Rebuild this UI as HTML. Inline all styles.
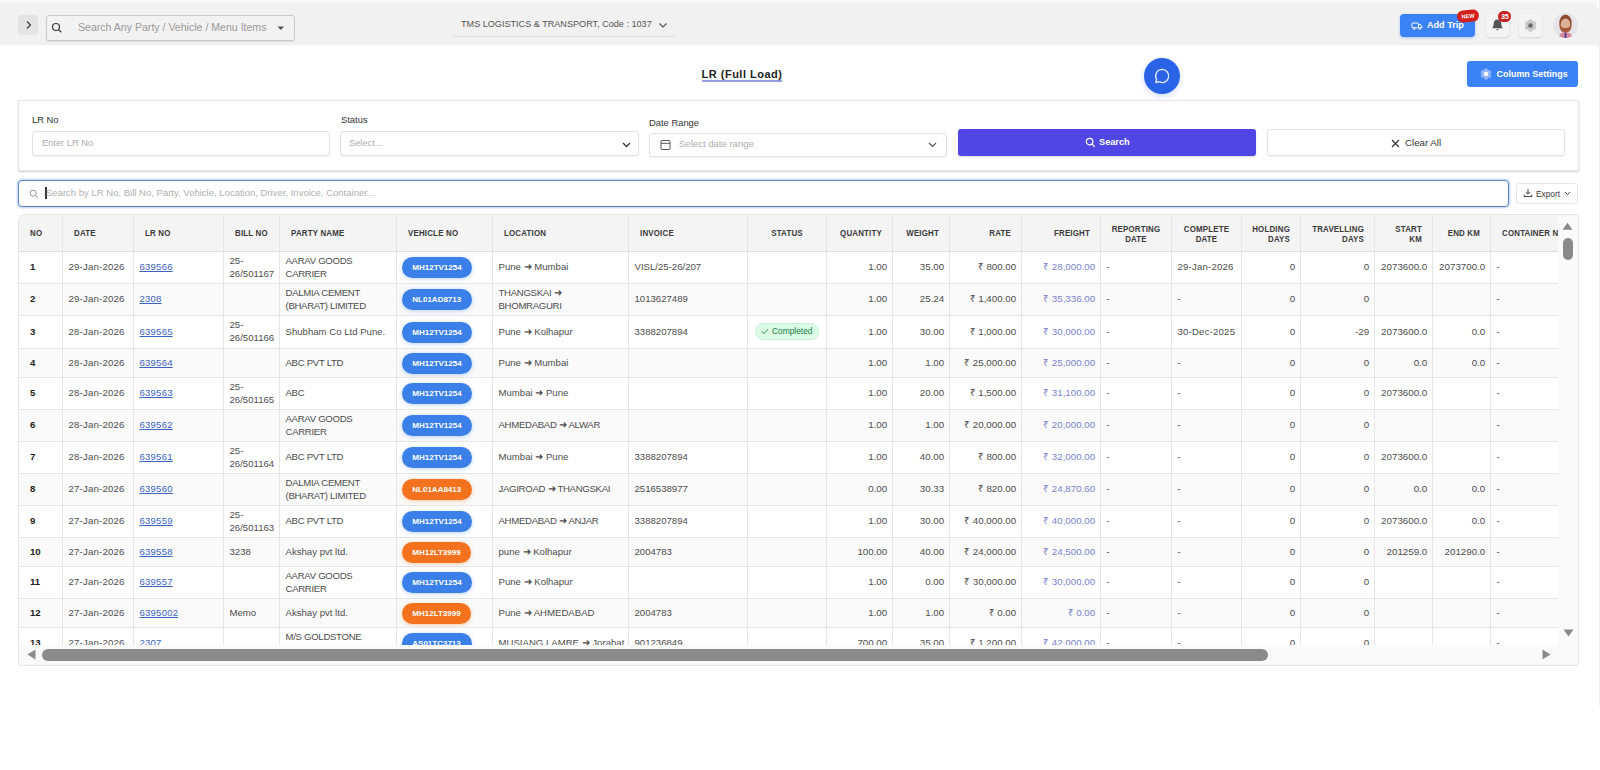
<!DOCTYPE html>
<html lang="en">
<head>
<meta charset="utf-8">
<title>LR (Full Load)</title>
<style>
*{box-sizing:border-box;margin:0;padding:0}
html,body{width:1600px;height:770px;overflow:hidden;background:#fff}
body{font-family:"Liberation Sans",sans-serif;color:#333;position:relative;font-size:9.5px}
.abs{position:absolute}
/* outer chrome */
#topstrip{left:0;top:0;width:1600px;height:4px;background:#f8f8f8}
#rightstrip{left:1599px;top:0;width:1px;height:706px;background:#f0f0f0}
#topbar{left:0;top:3px;width:1599px;height:43px;background:#f1f1f1;border-bottom:1px solid #f9f9f9;border-top-right-radius:8px}
#toggle{left:18px;top:15px;width:20px;height:20px;background:#e4e4e4;border-radius:4px}
#gsearch{left:46px;top:15px;width:249px;height:26px;border:1px solid #c9c9c9;border-radius:3px;background:#f2f2f2;box-shadow:0 1px 1px rgba(0,0,0,.08)}
#gsearch .ph{left:31px;top:5px;font-size:10.57px;color:#9a9a9a;white-space:nowrap;letter-spacing:0}
#company{left:452px;top:13px;width:224px;height:24px;border-bottom:1px solid #e2e2e2;font-size:9.1px;color:#555;white-space:nowrap}
#company span{position:absolute;left:9px;top:6px}
#addtrip{left:1400px;top:14px;width:75px;height:23px;background:#3b82f6;border-radius:4px;color:#fff;font-weight:bold;font-size:9.1px;box-shadow:0 1px 3px rgba(59,130,246,.4)}
#addtrip span{position:absolute;left:27px;top:6px;white-space:nowrap}
#newb{left:1457px;top:10px;width:22px;height:12px;background:#d41f1f;border-radius:6px;color:#fff;font-size:5.5px;font-weight:bold;text-align:center;line-height:12px;transform:rotate(-5deg)}
.ibtn{width:23px;height:23px;top:14px;background:#f4f4f4;border-radius:4px;box-shadow:0 1px 2px rgba(0,0,0,.12)}
#bellb{left:1498px;top:10.700px;width:13.300px;height:11.400px;border-radius:5.700px;background:#c81e1e;color:#fff;font-size:7.200px;font-weight:bold;text-align:center;line-height:11.400px;letter-spacing:-.3px}
#avatar{left:1553px;top:13px;width:25px;height:25px;border-radius:13px;background:#e6e6ea;overflow:hidden}
/* title row */
#title{left:642px;top:68px;width:200px;text-align:center;font-size:11px;letter-spacing:.5px;font-weight:bold;color:#222}
#title span{border-bottom:2px solid #979ee0;padding-bottom:0}
#chat{left:1144px;top:58px;width:36px;height:36px;border-radius:18px;background:#2b63e6;box-shadow:0 2px 6px rgba(37,99,235,.22)}
#colset{left:1467px;top:61px;width:111px;height:26px;border-radius:3px;background:#3b82f6;color:#fff;font-weight:bold;font-size:8.960px}
#colset span{position:absolute;left:29.500px;top:8px;white-space:nowrap}
/* filter card */
#fcard{left:18px;top:100px;width:1561px;height:71px;border:1px solid #e6e6e6;border-radius:2px;background:#fff;box-shadow:0 1px 2px rgba(0,0,0,.2)}
.lbl{font-size:9.4px;color:#333;white-space:nowrap}
.inp{height:25px;border:1px solid #e1e1e1;border-radius:3px;background:#fff;box-shadow:0 1px 1px rgba(0,0,0,.05)}
.inp .ph{position:absolute;top:5.500px;font-size:9.300px;color:#adadad;white-space:nowrap}
#bsearch{left:958px;top:129px;width:298px;height:27px;background:#4f46e5;border-radius:3px;color:#fff;font-weight:bold;font-size:9.2px;box-shadow:0 1px 2px rgba(0,0,0,.15)}
#bclear{left:1267px;top:129px;width:298px;height:27px;background:#fff;border:1px solid #e2e2e2;border-radius:3px;color:#333;font-size:9.700px;box-shadow:0 1px 1px rgba(0,0,0,.05)}
/* quick search */
#qsearch{left:18px;top:180px;width:1491px;height:27px;border:1.5px solid #5b86cf;border-radius:4px;background:#fff;box-shadow:0 0 0 1.5px rgba(120,160,230,.35)}
#qsearch .ph{position:absolute;left:27px;top:5.500px;font-size:9.520px;color:#b0b0b0;white-space:nowrap}
#export{left:1516px;top:183px;width:62px;height:21px;border:1px solid #e6e6e6;border-radius:3px;background:#fff;font-size:8.300px;color:#333}
/* table */
#tbl{left:18px;top:214px;width:1561px;height:452px;border:1px solid #e4e4e4;border-radius:7px 3px 3px 3px;background:#fafafa;overflow:hidden}
#tin{position:absolute;left:0;top:0;width:1539px;height:430px;overflow:hidden;background:#fff}
.tr{display:flex;width:1700px;background:#fff;border-bottom:1px solid #e5e5e5}
.tr.alt{background:#fafafa}
.tr.th{height:37px;background:#f4f4f4;border-bottom:1px solid #dedede}
.td{flex:none;height:100%;border-right:1px solid #e5e5e5;display:flex;align-items:center;padding:0 5.5px 2px;font-size:9.600px;line-height:13px;color:#4d4d4d;white-space:nowrap;overflow:hidden}
.th .td{font-size:7.900px;font-weight:bold;color:#3a3a3a;letter-spacing:.2px;line-height:9px;padding:1.500px 11px 0}
.th .td span{display:inline-block;transform:scaleY(1.13)}
.th .hc{justify-content:center;text-align:center}
.th .hr{justify-content:flex-end;text-align:right;padding-right:10px}
.td.r{justify-content:flex-end;font-size:9.750px;padding-right:4.800px}
.td .uc{letter-spacing:-.3px}
.td .dt,.td a{letter-spacing:.2px}
.td.no{font-weight:bold;color:#222;padding-left:11px}
.td.fr{color:#7a82d0}
.td.st{justify-content:center;padding:0}
.td.veh{padding-bottom:0;padding-left:4.500px}
.td a{color:#3b63c4;text-decoration:underline}
.pill{display:block;padding:0 10.800px;height:21px;border-radius:11px;color:#fff;font-weight:bold;font-size:8px;line-height:21px;text-align:center;box-shadow:0 1px 4px rgba(59,130,246,.35)}
.pill.b{background:#3b80e8}
.pill.o{background:#f4721e;box-shadow:0 1px 4px rgba(244,114,30,.35)}
.done{display:inline-flex;align-items:center;gap:3px;height:17px;padding:0 5.500px 0 5px;margin-bottom:1px;border-radius:9px;background:#dcfce7;border:1px solid #c4f1d3;color:#15803d;font-size:8.400px}
#vsb{left:1539px;top:0;width:20px;height:430px;background:#fafafa}
#hsb{left:0;top:430px;width:1559px;height:19px;background:#fafafa}
</style>
</head>
<body>
<div class="abs" id="topstrip"></div>
<div class="abs" id="rightstrip"></div>
<div class="abs" id="topbar"></div>
<div class="abs" id="toggle">
<svg class="abs" style="left:7px;top:5px" width="8" height="10" viewBox="0 0 8 10"><path d="M2 1.5 L5.5 5 L2 8.500" fill="none" stroke="#444" stroke-width="1.3"/></svg>
</div>
<div class="abs" id="gsearch">
<svg class="abs" style="left:3px;top:5px" width="14" height="14" viewBox="0 0 14 14"><circle cx="6" cy="6" r="3.500" fill="none" stroke="#3a3a3a" stroke-width="1.200"/><path d="M8.600 8.600 L11.300 11.300" stroke="#3a3a3a" stroke-width="1.300"/></svg>
<div class="abs ph">Search Any Party / Vehicle / Menu Items</div>
<svg class="abs" style="left:230px;top:10px" width="8" height="5" viewBox="0 0 8 5"><path d="M0.500 0.500 L7 0.500 L3.750 4 Z" fill="#555"/></svg>
</div>
<div class="abs" id="company"><span>TMS LOGISTICS &amp; TRANSPORT, Code : 1037</span>
<svg class="abs" style="left:206px;top:9px" width="10" height="7" viewBox="0 0 10 7"><path d="M1.500 1.500 L5 5 L8.500 1.500" fill="none" stroke="#555" stroke-width="1.2"/></svg>
</div>
<div class="abs" id="addtrip">
<svg class="abs" style="left:10.500px;top:7.500px" width="12" height="9" viewBox="0 0 12 9"><rect x="0.900" y="1" width="6.600" height="4.800" rx="0.900" fill="none" stroke="#fff" stroke-width="1"/><path d="M7.500 2.600 H9.600 L10.800 4.100 V5.800 H7.500" fill="none" stroke="#fff" stroke-width="1"/><circle cx="3.200" cy="6.400" r="1" fill="#3b82f6" stroke="#fff" stroke-width="0.900"/><circle cx="8.700" cy="6.400" r="1" fill="#3b82f6" stroke="#fff" stroke-width="0.900"/></svg>
<span>Add Trip</span></div>
<div class="abs" id="newb">NEW</div>
<div class="abs ibtn" style="left:1486px">
<svg class="abs" style="left:5px;top:4px" width="13" height="15" viewBox="0 0 13 15"><path d="M6.500 1.500 C3.800 1.500 2.700 3.600 2.700 5.800 C2.700 8.200 1.800 9.300 1.200 10.200 H11.800 C11.200 9.300 10.300 8.200 10.300 5.800 C10.300 3.600 9.200 1.500 6.500 1.500 Z" fill="#555"/><path d="M5 11.200 a1.600 1.600 0 0 0 3 0 Z" fill="#555"/></svg>
</div>
<div class="abs" id="bellb">35</div>
<div class="abs ibtn" style="left:1519px">
<svg class="abs" style="left:4px;top:4px" width="15" height="15" viewBox="0 0 15 15"><g fill="#c8c8c8"><circle cx="7.500" cy="3.600" r="2.300"/><circle cx="7.500" cy="11.400" r="2.300"/><circle cx="4.100" cy="5.500" r="2.300"/><circle cx="10.900" cy="5.500" r="2.300"/><circle cx="4.100" cy="9.500" r="2.300"/><circle cx="10.900" cy="9.500" r="2.300"/></g><circle cx="7.500" cy="7.500" r="2.300" fill="#6a6a6a"/></svg>
</div>
<div class="abs" id="avatar">
<svg width="25" height="25" viewBox="0 0 25 25"><path d="M5.500 25 Q6.500 19 12.500 19 Q18.500 19 19.500 25Z" fill="#d68b9b"/><rect x="11.600" y="19.500" width="1.800" height="5.500" fill="#4a3fa0"/><ellipse cx="12.500" cy="10" rx="6.200" ry="8.600" fill="#8f4a30"/><ellipse cx="12.500" cy="11.200" rx="4.800" ry="5.600" fill="#ddb195"/><path d="M6.300 11.500 Q6.500 19.500 12.500 19.500 Q18.500 19.500 18.700 11.500 Q17 15 12.500 15 Q8 15 6.300 11.500Z" fill="#a5593a"/></svg>
</div>

<div class="abs" id="title"><span>LR (Full Load)</span></div>
<div class="abs" id="chat">
<svg class="abs" style="left:9px;top:9px" width="18" height="18" viewBox="0 0 17 17"><path d="M8.700 2.300 a6.200 6.200 0 1 1 -3.100 11.600 L2.600 14.600 L3.400 11.700 A6.200 6.200 0 0 1 8.700 2.300 Z" fill="none" stroke="#dbe7ff" stroke-width="1.300" stroke-linejoin="round"/></svg>
</div>
<div class="abs" id="colset">
<svg class="abs" style="left:11.500px;top:6px" width="14" height="14" viewBox="0 0 15 15"><g fill="#8db4f9"><circle cx="7.500" cy="3.600" r="2.300"/><circle cx="7.500" cy="11.400" r="2.300"/><circle cx="4.100" cy="5.500" r="2.300"/><circle cx="10.900" cy="5.500" r="2.300"/><circle cx="4.100" cy="9.500" r="2.300"/><circle cx="10.900" cy="9.500" r="2.300"/></g><circle cx="7.500" cy="7.500" r="2.400" fill="#fff"/></svg>
<span>Column Settings</span></div>

<div class="abs" id="fcard"></div>
<div class="abs lbl" style="left:32px;top:114px">LR No</div>
<div class="abs inp" style="left:32px;top:131px;width:298px"><div class="ph" style="left:9px">Enter LR No</div></div>
<div class="abs lbl" style="left:341px;top:114px">Status</div>
<div class="abs inp" style="left:340px;top:131px;width:299px"><div class="ph" style="left:8px">Select...</div>
<svg class="abs" style="left:281px;top:10px" width="9" height="6" viewBox="0 0 9 6"><path d="M1 1 L4.500 4.500 L8 1" fill="none" stroke="#333" stroke-width="1.300"/></svg></div>
<div class="abs lbl" style="left:649px;top:117px">Date Range</div>
<div class="abs inp" style="left:649px;top:133px;width:298px;height:24px"><div class="ph" style="left:29px;top:3.500px;font-size:9.550px">Select date range</div>
<svg class="abs" style="left:10px;top:5px" width="11" height="12" viewBox="0 0 11 12"><rect x="1" y="1.500" width="9" height="9" rx="1" fill="none" stroke="#555" stroke-width="1"/><path d="M1 4.300 H10" stroke="#555" stroke-width="1"/></svg>
<svg class="abs" style="left:278px;top:7.500px" width="9" height="6" viewBox="0 0 9 6"><path d="M1 1 L4.500 4.500 L8 1" fill="none" stroke="#555" stroke-width="1.200"/></svg></div>
<div class="abs" id="bsearch">
<svg class="abs" style="left:127px;top:8px" width="11" height="11" viewBox="0 0 11 11"><circle cx="4.600" cy="4.600" r="3.300" fill="none" stroke="#fff" stroke-width="1.200"/><path d="M7 7 L9.800 9.800" stroke="#fff" stroke-width="1.200"/></svg>
<span class="abs" style="left:141px;top:8px">Search</span></div>
<div class="abs" id="bclear">
<svg class="abs" style="left:123px;top:8.500px" width="9" height="9" viewBox="0 0 9 9"><path d="M1 1 L8 8 M8 1 L1 8" stroke="#333" stroke-width="1.200"/></svg>
<span class="abs" style="left:137px;top:6.500px;white-space:nowrap">Clear All</span></div>

<div class="abs" id="qsearch">
<svg class="abs" style="left:9.500px;top:7.500px" width="10" height="10" viewBox="0 0 10 10"><circle cx="4.200" cy="4.200" r="3.100" fill="none" stroke="#8a8a8a" stroke-width="0.900"/><path d="M6.500 6.500 L9.200 9.200" stroke="#8a8a8a" stroke-width="0.900"/></svg>
<div class="abs" style="left:26px;top:6px;width:1.500px;height:11.500px;background:#333"></div>
<div class="ph">Search by LR No, Bill No, Party, Vehicle, Location, Driver, Invoice, Container...</div>
</div>
<div class="abs" id="export">
<svg class="abs" style="left:6px;top:4px" width="10" height="10" viewBox="0 0 10 10"><path d="M5 1 V6 M2.800 4 L5 6.200 L7.200 4 M1.200 6.500 V8.500 H8.800 V6.500" fill="none" stroke="#444" stroke-width="1"/></svg>
<span class="abs" style="left:19px;top:4.500px">Export</span>
<svg class="abs" style="left:47px;top:7px" width="7" height="5" viewBox="0 0 7 5"><path d="M1 1 L3.500 3.500 L6 1" fill="none" stroke="#444" stroke-width="1"/></svg>
</div>

<!--TB-->
<div class="abs" id="tbl">
<div id="tin">
<div class="tr th">
<div class="td hl" style="width:44px"><span>NO</span></div>
<div class="td hl" style="width:71px"><span>DATE</span></div>
<div class="td hl" style="width:90px"><span>LR NO</span></div>
<div class="td hl" style="width:56px"><span>BILL NO</span></div>
<div class="td hl" style="width:117px"><span>PARTY NAME</span></div>
<div class="td hl" style="width:96px"><span>VEHICLE NO</span></div>
<div class="td hl" style="width:136px"><span>LOCATION</span></div>
<div class="td hl" style="width:119px"><span>INVOICE</span></div>
<div class="td hc" style="width:79px"><span>STATUS</span></div>
<div class="td hr" style="width:66px"><span>QUANTITY</span></div>
<div class="td hr" style="width:57px"><span>WEIGHT</span></div>
<div class="td hr" style="width:72px"><span>RATE</span></div>
<div class="td hr" style="width:79px"><span>FREIGHT</span></div>
<div class="td hc" style="width:71px"><span>REPORTING<br>DATE</span></div>
<div class="td hc" style="width:70px"><span>COMPLETE<br>DATE</span></div>
<div class="td hr" style="width:59px"><span>HOLDING<br>DAYS</span></div>
<div class="td hr" style="width:74px"><span>TRAVELLING<br>DAYS</span></div>
<div class="td hr" style="width:58px"><span>START<br>KM</span></div>
<div class="td hr" style="width:58px"><span>END KM</span></div>
<div class="td hl" style="width:80px"><span>CONTAINER NO</span></div>
</div>
<div class="tr" style="height:32px">
<div class="td no" style="width:44px"><span>1</span></div>
<div class="td" style="width:71px"><span class="dt">29-Jan-2026</span></div>
<div class="td lr" style="width:90px"><a>639566</a></div>
<div class="td" style="width:56px"><span>25-<br>26/501167</span></div>
<div class="td" style="width:117px"><span class="uc">AARAV GOODS<br>CARRIER</span></div>
<div class="td veh" style="width:96px"><span class="pill b">MH12TV1254</span></div>
<div class="td" style="width:136px"><span>Pune ➜ Mumbai</span></div>
<div class="td" style="width:119px"><span>VISL/25-26/207</span></div>
<div class="td st" style="width:79px"></div>
<div class="td r" style="width:66px"><span>1.00</span></div>
<div class="td r" style="width:57px"><span>35.00</span></div>
<div class="td r" style="width:72px"><span>₹ 800.00</span></div>
<div class="td r fr" style="width:79px"><span>₹ 28,000.00</span></div>
<div class="td" style="width:71px"><span>-</span></div>
<div class="td" style="width:70px"><span class="dt">29-Jan-2026</span></div>
<div class="td r" style="width:59px"><span>0</span></div>
<div class="td r" style="width:74px"><span>0</span></div>
<div class="td r" style="width:58px"><span>2073600.0</span></div>
<div class="td r" style="width:58px"><span>2073700.0</span></div>
<div class="td" style="width:80px"><span>-</span></div>
</div>
<div class="tr alt" style="height:32px">
<div class="td no" style="width:44px"><span>2</span></div>
<div class="td" style="width:71px"><span class="dt">29-Jan-2026</span></div>
<div class="td lr" style="width:90px"><a>2308</a></div>
<div class="td" style="width:56px"></div>
<div class="td" style="width:117px"><span class="uc">DALMIA CEMENT<br>(BHARAT) LIMITED</span></div>
<div class="td veh" style="width:96px"><span class="pill b">NL01AD8713</span></div>
<div class="td" style="width:136px"><span class="uc">THANGSKAI ➜<br>BHOMRAGURI</span></div>
<div class="td" style="width:119px"><span>1013627489</span></div>
<div class="td st" style="width:79px"></div>
<div class="td r" style="width:66px"><span>1.00</span></div>
<div class="td r" style="width:57px"><span>25.24</span></div>
<div class="td r" style="width:72px"><span>₹ 1,400.00</span></div>
<div class="td r fr" style="width:79px"><span>₹ 35,336.00</span></div>
<div class="td" style="width:71px"><span>-</span></div>
<div class="td" style="width:70px"><span>-</span></div>
<div class="td r" style="width:59px"><span>0</span></div>
<div class="td r" style="width:74px"><span>0</span></div>
<div class="td r" style="width:58px"></div>
<div class="td r" style="width:58px"></div>
<div class="td" style="width:80px"><span>-</span></div>
</div>
<div class="tr" style="height:33px">
<div class="td no" style="width:44px"><span>3</span></div>
<div class="td" style="width:71px"><span class="dt">28-Jan-2026</span></div>
<div class="td lr" style="width:90px"><a>639565</a></div>
<div class="td" style="width:56px"><span>25-<br>26/501166</span></div>
<div class="td" style="width:117px"><span>Shubham Co Ltd Pune.</span></div>
<div class="td veh" style="width:96px"><span class="pill b">MH12TV1254</span></div>
<div class="td" style="width:136px"><span>Pune ➜ Kolhapur</span></div>
<div class="td" style="width:119px"><span>3388207894</span></div>
<div class="td st" style="width:79px"><span class="done"><svg width="8" height="7" viewBox="0 0 8 7"><path d="M1 3.700 L3 5.600 L7 1.200" fill="none" stroke="#15803d" stroke-width="0.900"/></svg>Completed</span></div>
<div class="td r" style="width:66px"><span>1.00</span></div>
<div class="td r" style="width:57px"><span>30.00</span></div>
<div class="td r" style="width:72px"><span>₹ 1,000.00</span></div>
<div class="td r fr" style="width:79px"><span>₹ 30,000.00</span></div>
<div class="td" style="width:71px"><span>-</span></div>
<div class="td" style="width:70px"><span class="dt">30-Dec-2025</span></div>
<div class="td r" style="width:59px"><span>0</span></div>
<div class="td r" style="width:74px"><span>-29</span></div>
<div class="td r" style="width:58px"><span>2073600.0</span></div>
<div class="td r" style="width:58px"><span>0.0</span></div>
<div class="td" style="width:80px"><span>-</span></div>
</div>
<div class="tr alt" style="height:29px">
<div class="td no" style="width:44px"><span>4</span></div>
<div class="td" style="width:71px"><span class="dt">28-Jan-2026</span></div>
<div class="td lr" style="width:90px"><a>639564</a></div>
<div class="td" style="width:56px"></div>
<div class="td" style="width:117px"><span class="uc">ABC PVT LTD</span></div>
<div class="td veh" style="width:96px"><span class="pill b">MH12TV1254</span></div>
<div class="td" style="width:136px"><span>Pune ➜ Mumbai</span></div>
<div class="td" style="width:119px"></div>
<div class="td st" style="width:79px"></div>
<div class="td r" style="width:66px"><span>1.00</span></div>
<div class="td r" style="width:57px"><span>1.00</span></div>
<div class="td r" style="width:72px"><span>₹ 25,000.00</span></div>
<div class="td r fr" style="width:79px"><span>₹ 25,000.00</span></div>
<div class="td" style="width:71px"><span>-</span></div>
<div class="td" style="width:70px"><span>-</span></div>
<div class="td r" style="width:59px"><span>0</span></div>
<div class="td r" style="width:74px"><span>0</span></div>
<div class="td r" style="width:58px"><span>0.0</span></div>
<div class="td r" style="width:58px"><span>0.0</span></div>
<div class="td" style="width:80px"><span>-</span></div>
</div>
<div class="tr" style="height:32px">
<div class="td no" style="width:44px"><span>5</span></div>
<div class="td" style="width:71px"><span class="dt">28-Jan-2026</span></div>
<div class="td lr" style="width:90px"><a>639563</a></div>
<div class="td" style="width:56px"><span>25-<br>26/501165</span></div>
<div class="td" style="width:117px"><span class="uc">ABC</span></div>
<div class="td veh" style="width:96px"><span class="pill b">MH12TV1254</span></div>
<div class="td" style="width:136px"><span>Mumbai ➜ Pune</span></div>
<div class="td" style="width:119px"></div>
<div class="td st" style="width:79px"></div>
<div class="td r" style="width:66px"><span>1.00</span></div>
<div class="td r" style="width:57px"><span>20.00</span></div>
<div class="td r" style="width:72px"><span>₹ 1,500.00</span></div>
<div class="td r fr" style="width:79px"><span>₹ 31,100.00</span></div>
<div class="td" style="width:71px"><span>-</span></div>
<div class="td" style="width:70px"><span>-</span></div>
<div class="td r" style="width:59px"><span>0</span></div>
<div class="td r" style="width:74px"><span>0</span></div>
<div class="td r" style="width:58px"><span>2073600.0</span></div>
<div class="td r" style="width:58px"></div>
<div class="td" style="width:80px"><span>-</span></div>
</div>
<div class="tr alt" style="height:32px">
<div class="td no" style="width:44px"><span>6</span></div>
<div class="td" style="width:71px"><span class="dt">28-Jan-2026</span></div>
<div class="td lr" style="width:90px"><a>639562</a></div>
<div class="td" style="width:56px"></div>
<div class="td" style="width:117px"><span class="uc">AARAV GOODS<br>CARRIER</span></div>
<div class="td veh" style="width:96px"><span class="pill b">MH12TV1254</span></div>
<div class="td" style="width:136px"><span class="uc">AHMEDABAD ➜ ALWAR</span></div>
<div class="td" style="width:119px"></div>
<div class="td st" style="width:79px"></div>
<div class="td r" style="width:66px"><span>1.00</span></div>
<div class="td r" style="width:57px"><span>1.00</span></div>
<div class="td r" style="width:72px"><span>₹ 20,000.00</span></div>
<div class="td r fr" style="width:79px"><span>₹ 20,000.00</span></div>
<div class="td" style="width:71px"><span>-</span></div>
<div class="td" style="width:70px"><span>-</span></div>
<div class="td r" style="width:59px"><span>0</span></div>
<div class="td r" style="width:74px"><span>0</span></div>
<div class="td r" style="width:58px"></div>
<div class="td r" style="width:58px"></div>
<div class="td" style="width:80px"><span>-</span></div>
</div>
<div class="tr" style="height:32px">
<div class="td no" style="width:44px"><span>7</span></div>
<div class="td" style="width:71px"><span class="dt">28-Jan-2026</span></div>
<div class="td lr" style="width:90px"><a>639561</a></div>
<div class="td" style="width:56px"><span>25-<br>26/501164</span></div>
<div class="td" style="width:117px"><span class="uc">ABC PVT LTD</span></div>
<div class="td veh" style="width:96px"><span class="pill b">MH12TV1254</span></div>
<div class="td" style="width:136px"><span>Mumbai ➜ Pune</span></div>
<div class="td" style="width:119px"><span>3388207894</span></div>
<div class="td st" style="width:79px"></div>
<div class="td r" style="width:66px"><span>1.00</span></div>
<div class="td r" style="width:57px"><span>40.00</span></div>
<div class="td r" style="width:72px"><span>₹ 800.00</span></div>
<div class="td r fr" style="width:79px"><span>₹ 32,000.00</span></div>
<div class="td" style="width:71px"><span>-</span></div>
<div class="td" style="width:70px"><span>-</span></div>
<div class="td r" style="width:59px"><span>0</span></div>
<div class="td r" style="width:74px"><span>0</span></div>
<div class="td r" style="width:58px"><span>2073600.0</span></div>
<div class="td r" style="width:58px"></div>
<div class="td" style="width:80px"><span>-</span></div>
</div>
<div class="tr alt" style="height:32px">
<div class="td no" style="width:44px"><span>8</span></div>
<div class="td" style="width:71px"><span class="dt">27-Jan-2026</span></div>
<div class="td lr" style="width:90px"><a>639560</a></div>
<div class="td" style="width:56px"></div>
<div class="td" style="width:117px"><span class="uc">DALMIA CEMENT<br>(BHARAT) LIMITED</span></div>
<div class="td veh" style="width:96px"><span class="pill o">NL01AA8413</span></div>
<div class="td" style="width:136px"><span class="uc">JAGIROAD ➜ THANGSKAI</span></div>
<div class="td" style="width:119px"><span>2516538977</span></div>
<div class="td st" style="width:79px"></div>
<div class="td r" style="width:66px"><span>0.00</span></div>
<div class="td r" style="width:57px"><span>30.33</span></div>
<div class="td r" style="width:72px"><span>₹ 820.00</span></div>
<div class="td r fr" style="width:79px"><span>₹ 24,870.60</span></div>
<div class="td" style="width:71px"><span>-</span></div>
<div class="td" style="width:70px"><span>-</span></div>
<div class="td r" style="width:59px"><span>0</span></div>
<div class="td r" style="width:74px"><span>0</span></div>
<div class="td r" style="width:58px"><span>0.0</span></div>
<div class="td r" style="width:58px"><span>0.0</span></div>
<div class="td" style="width:80px"><span>-</span></div>
</div>
<div class="tr" style="height:32px">
<div class="td no" style="width:44px"><span>9</span></div>
<div class="td" style="width:71px"><span class="dt">27-Jan-2026</span></div>
<div class="td lr" style="width:90px"><a>639559</a></div>
<div class="td" style="width:56px"><span>25-<br>26/501163</span></div>
<div class="td" style="width:117px"><span class="uc">ABC PVT LTD</span></div>
<div class="td veh" style="width:96px"><span class="pill b">MH12TV1254</span></div>
<div class="td" style="width:136px"><span class="uc">AHMEDABAD ➜ ANJAR</span></div>
<div class="td" style="width:119px"><span>3388207894</span></div>
<div class="td st" style="width:79px"></div>
<div class="td r" style="width:66px"><span>1.00</span></div>
<div class="td r" style="width:57px"><span>30.00</span></div>
<div class="td r" style="width:72px"><span>₹ 40,000.00</span></div>
<div class="td r fr" style="width:79px"><span>₹ 40,000.00</span></div>
<div class="td" style="width:71px"><span>-</span></div>
<div class="td" style="width:70px"><span>-</span></div>
<div class="td r" style="width:59px"><span>0</span></div>
<div class="td r" style="width:74px"><span>0</span></div>
<div class="td r" style="width:58px"><span>2073600.0</span></div>
<div class="td r" style="width:58px"><span>0.0</span></div>
<div class="td" style="width:80px"><span>-</span></div>
</div>
<div class="tr alt" style="height:29px">
<div class="td no" style="width:44px"><span>10</span></div>
<div class="td" style="width:71px"><span class="dt">27-Jan-2026</span></div>
<div class="td lr" style="width:90px"><a>639558</a></div>
<div class="td" style="width:56px"><span>3238</span></div>
<div class="td" style="width:117px"><span>Akshay pvt ltd.</span></div>
<div class="td veh" style="width:96px"><span class="pill o">MH12LT3999</span></div>
<div class="td" style="width:136px"><span>pune ➜ Kolhapur</span></div>
<div class="td" style="width:119px"><span>2004783</span></div>
<div class="td st" style="width:79px"></div>
<div class="td r" style="width:66px"><span>100.00</span></div>
<div class="td r" style="width:57px"><span>40.00</span></div>
<div class="td r" style="width:72px"><span>₹ 24,000.00</span></div>
<div class="td r fr" style="width:79px"><span>₹ 24,500.00</span></div>
<div class="td" style="width:71px"><span>-</span></div>
<div class="td" style="width:70px"><span>-</span></div>
<div class="td r" style="width:59px"><span>0</span></div>
<div class="td r" style="width:74px"><span>0</span></div>
<div class="td r" style="width:58px"><span>201259.0</span></div>
<div class="td r" style="width:58px"><span>201290.0</span></div>
<div class="td" style="width:80px"><span>-</span></div>
</div>
<div class="tr" style="height:32px">
<div class="td no" style="width:44px"><span>11</span></div>
<div class="td" style="width:71px"><span class="dt">27-Jan-2026</span></div>
<div class="td lr" style="width:90px"><a>639557</a></div>
<div class="td" style="width:56px"></div>
<div class="td" style="width:117px"><span class="uc">AARAV GOODS<br>CARRIER</span></div>
<div class="td veh" style="width:96px"><span class="pill b">MH12TV1254</span></div>
<div class="td" style="width:136px"><span>Pune ➜ Kolhapur</span></div>
<div class="td" style="width:119px"></div>
<div class="td st" style="width:79px"></div>
<div class="td r" style="width:66px"><span>1.00</span></div>
<div class="td r" style="width:57px"><span>0.00</span></div>
<div class="td r" style="width:72px"><span>₹ 30,000.00</span></div>
<div class="td r fr" style="width:79px"><span>₹ 30,000.00</span></div>
<div class="td" style="width:71px"><span>-</span></div>
<div class="td" style="width:70px"><span>-</span></div>
<div class="td r" style="width:59px"><span>0</span></div>
<div class="td r" style="width:74px"><span>0</span></div>
<div class="td r" style="width:58px"></div>
<div class="td r" style="width:58px"></div>
<div class="td" style="width:80px"><span>-</span></div>
</div>
<div class="tr alt" style="height:29px">
<div class="td no" style="width:44px"><span>12</span></div>
<div class="td" style="width:71px"><span class="dt">27-Jan-2026</span></div>
<div class="td lr" style="width:90px"><a>6395002</a></div>
<div class="td" style="width:56px"><span>Memo</span></div>
<div class="td" style="width:117px"><span>Akshay pvt ltd.</span></div>
<div class="td veh" style="width:96px"><span class="pill o">MH12LT3999</span></div>
<div class="td" style="width:136px"><span>Pune ➜ AHMEDABAD</span></div>
<div class="td" style="width:119px"><span>2004783</span></div>
<div class="td st" style="width:79px"></div>
<div class="td r" style="width:66px"><span>1.00</span></div>
<div class="td r" style="width:57px"><span>1.00</span></div>
<div class="td r" style="width:72px"><span>₹ 0.00</span></div>
<div class="td r fr" style="width:79px"><span>₹ 0.00</span></div>
<div class="td" style="width:71px"><span>-</span></div>
<div class="td" style="width:70px"><span>-</span></div>
<div class="td r" style="width:59px"><span>0</span></div>
<div class="td r" style="width:74px"><span>0</span></div>
<div class="td r" style="width:58px"></div>
<div class="td r" style="width:58px"></div>
<div class="td" style="width:80px"><span>-</span></div>
</div>
<div class="tr" style="height:32px">
<div class="td no" style="width:44px"><span>13</span></div>
<div class="td" style="width:71px"><span class="dt">27-Jan-2026</span></div>
<div class="td lr" style="width:90px"><a>2307</a></div>
<div class="td" style="width:56px"></div>
<div class="td" style="width:117px"><span class="uc">M/S GOLDSTONE<br>CEMENTS LTD</span></div>
<div class="td veh" style="width:96px"><span class="pill b">AS01TC3713</span></div>
<div class="td" style="width:136px"><span>MUSIANG LAMRE ➜ Jorabat</span></div>
<div class="td" style="width:119px"><span>901236849</span></div>
<div class="td st" style="width:79px"></div>
<div class="td r" style="width:66px"><span>700.00</span></div>
<div class="td r" style="width:57px"><span>35.00</span></div>
<div class="td r" style="width:72px"><span>₹ 1,200.00</span></div>
<div class="td r fr" style="width:79px"><span>₹ 42,000.00</span></div>
<div class="td" style="width:71px"><span>-</span></div>
<div class="td" style="width:70px"><span>-</span></div>
<div class="td r" style="width:59px"><span>0</span></div>
<div class="td r" style="width:74px"><span>0</span></div>
<div class="td r" style="width:58px"></div>
<div class="td r" style="width:58px"></div>
<div class="td" style="width:80px"><span>-</span></div>
</div>
</div>
<div class="abs" id="vsb"><svg class="abs" style="left:4px;top:7px" width="11" height="9" viewBox="0 0 11 9"><path d="M5.500 0.800 L10.500 7.800 H0.500 Z" fill="#8a8a8a"/></svg><div class="abs" style="left:4.500px;top:23px;width:10.500px;height:22px;border-radius:6px;background:#8a8a8a"></div><svg class="abs" style="left:4.500px;top:414px" width="11" height="8" viewBox="0 0 11 8"><path d="M0.500 0.500 H10.500 L5.500 7.500 Z" fill="#8a8a8a"/></svg></div>
<div class="abs" id="hsb"><svg class="abs" style="left:8px;top:4px" width="9" height="11" viewBox="0 0 9 11"><path d="M8.500 0.500 V10.500 L0.500 5.500 Z" fill="#8a8a8a"/></svg><div class="abs" style="left:23px;top:4px;width:1225.500px;height:11.500px;border-radius:6px;background:#8a8a8a"></div><svg class="abs" style="left:1523px;top:4px" width="9" height="11" viewBox="0 0 9 11"><path d="M0.500 0.500 V10.500 L8.500 5.500 Z" fill="#8a8a8a"/></svg></div>
</div>
<!--TE-->
</body>
</html>
